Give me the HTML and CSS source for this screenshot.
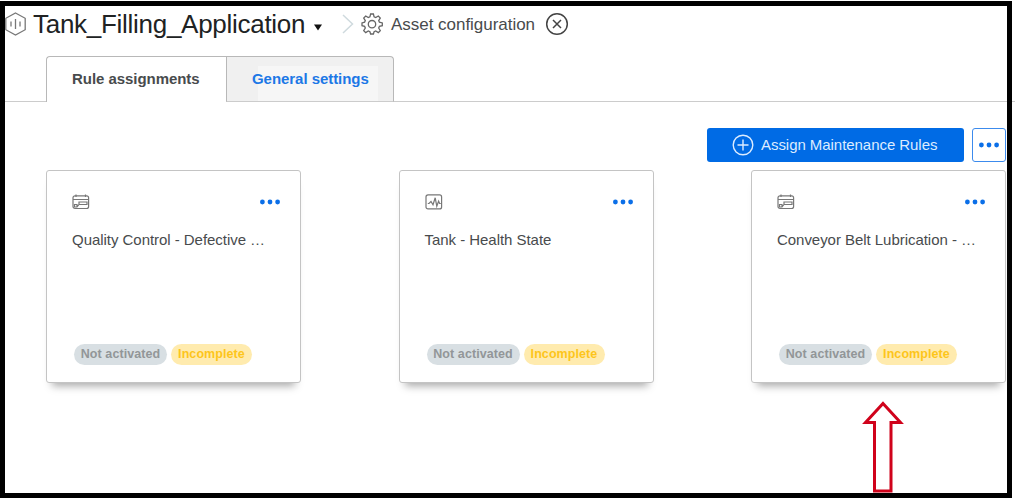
FILE: index.html
```html
<!DOCTYPE html>
<html lang="en">
<head>
<meta charset="utf-8">
<title>Asset configuration</title>
<link rel="stylesheet" href="styles.css">
</head>
<body>
<svg class="symbols" width="0" height="0" aria-hidden="true">
  <symbol id="dots" viewBox="0 0 20 6"><circle cx="2.4" cy="3" r="2.4"/><circle cx="10" cy="3" r="2.4"/><circle cx="17.6" cy="3" r="2.4"/></symbol>
  <symbol id="calendar" viewBox="0 0 18 16">
    <rect x="1" y="1.8" width="15.6" height="12.7" rx="2"/>
    <path d="M1 5.5h15.6M4 0.5v2.5M13.500 0.5v2.5M7 10.500V8h8v2.5H7L5 13H2.500v-2.500H5V13"/>
  </symbol>
  <symbol id="pulse" viewBox="0 0 18 16">
    <rect x="1" y="0.9" width="15.6" height="14" rx="2"/>
    <path d="M2.8 9.5h1.200l2-2 2 3.300 2.200-7 1.600 8.400 1.800-5 1 2.300h1.200"/>
  </symbol>
</svg>
<main class="frame">
  <header class="breadcrumb">
    <svg class="asset-icon" viewBox="0 0 22 24"><path d="M10.5 1l9.700 5.300v11.400L10.500 23 .8 17.700V6.300z"/><path d="M6 9.500v5M10.500 7v10M15 9.500v5"/></svg>
    <h1 class="title">Tank_Filling_Application</h1>
    <svg class="caret" viewBox="0 0 8 7"><path d="M0 .5h8L4 6.500z"/></svg>
    <svg class="chevron" viewBox="0 0 12 20"><path d="M1 1l9.500 9L1 19"/></svg>
    <svg class="gear" viewBox="0 0 22 22"><path d="M9.600 1h2.800l.7 2.900 1.600.7 2.600-1.600 2 2-1.600 2.600.7 1.600 2.900.7v2.800l-2.900.7-.7 1.600 1.600 2.600-2 2-2.600-1.600-1.600.7-.7 2.300H9.600l-.7-2.300-1.600-.7-2.600 1.600-2-2L4.300 15l-.7-1.600-2.600-.7V9.900l2.600-.7.700-1.600L2.700 5l2-2 2.600 1.600 1.600-.7z"/><circle cx="11" cy="11.200" r="3.700"/></svg>
    <span class="crumb">Asset configuration</span>
    <svg class="close" viewBox="0 0 24 24"><circle cx="12" cy="12" r="10.300"/><path d="M8 8l8 8M16 8l-8 8"/></svg>
  </header>
  <nav class="tabs">
    <div class="tab tab-active">Rule assignments</div>
    <div class="tab tab-idle">General settings</div>
  </nav>
  <div class="toolbar">
    <button class="assign"><svg viewBox="0 0 22 22"><circle cx="11" cy="11" r="9.800"/><path d="M11 5.500v11M5.500 11h11"/></svg><span class="assign-label">Assign Maintenance Rules</span></button>
    <button class="more"><svg class="dots"><use href="#dots"/></svg></button>
  </div>
  <section class="cards">
    <article class="card">
      <div class="card-top"><svg class="kind"><use href="#calendar"/></svg><svg class="dots"><use href="#dots"/></svg></div>
      <h2 class="name">Quality Control - Defective …</h2>
      <div class="badges"><span class="badge inactive">Not activated</span><span class="badge incomplete">Incomplete</span></div>
    </article>
    <article class="card">
      <div class="card-top"><svg class="kind"><use href="#pulse"/></svg><svg class="dots"><use href="#dots"/></svg></div>
      <h2 class="name">Tank - Health State</h2>
      <div class="badges"><span class="badge inactive">Not activated</span><span class="badge incomplete">Incomplete</span></div>
    </article>
    <article class="card">
      <div class="card-top"><svg class="kind"><use href="#calendar"/></svg><svg class="dots"><use href="#dots"/></svg></div>
      <h2 class="name">Conveyor Belt Lubrication - …</h2>
      <div class="badges"><span class="badge inactive">Not activated</span><span class="badge incomplete">Incomplete</span></div>
    </article>
  </section>
  <svg class="arrow" viewBox="0 0 42 92"><path d="M21 2.500L38.500 21.500H29V90H12.500V21.500H3.500z"/></svg>
</main>
</body>
</html>
```
FILE: styles.css
```css
* { box-sizing: border-box; }
body { margin: 0; width: 1015px; height: 500px; overflow: hidden; background: linear-gradient(#ccc, #ccc) 0 101px / 100% 1px no-repeat #fff; font-family: "Liberation Sans", Arial, sans-serif; color: #484b4d; display: flow-root; }
svg { display: block; flex: none; fill: none; stroke: #55585a; }
h1, h2 { margin: 0; font-weight: 400; white-space: nowrap; }
.symbols { position: absolute; }
.frame { position: relative; width: 1012px; height: 497px; margin-top: 1px; border: 5px solid #000; background: #fff; display: flex; flex-direction: column; }
.breadcrumb { height: 50px; display: flex; align-items: flex-start; white-space: nowrap; }
.asset-icon { width: 22px; height: 24px; margin-top: 6px; stroke: #777; stroke-width: 1.300; }
.title { width: 273px; margin-left: 6px; font-size: 26px; letter-spacing: -0.28px; line-height: 37px; color: #202223; }
.caret { width: 8px; height: 7px; margin: 18px 0 0 8px; fill: #111; stroke: none; }
.chevron { width: 12px; height: 20px; margin: 8px 0 0 20px; stroke: #cfdade; stroke-width: 1.500; }
.gear { width: 22px; height: 22px; margin: 7px 0 0 7px; stroke: #666; stroke-width: 1.300; }
.crumb { width: 145px; margin-left: 8px; font-size: 17px; letter-spacing: -0.03px; line-height: 38px; }
.close { width: 24px; height: 24px; margin: 6px 0 0 9px; stroke: #444; stroke-width: 1.500; }
.tabs { height: 46px; padding-left: 41px; display: flex; background: linear-gradient(#ccc, #ccc) 0 100% / 100% 1px no-repeat; }
.tab { height: 46px; font-size: 15px; font-weight: 700; line-height: 43px; border: 1px solid #b8b8b8; white-space: nowrap; }
.tab-active { width: 180px; padding-left: 25px; letter-spacing: -0.05px; border-bottom: 0; border-right: 0; border-radius: 4px 0 0 0; background: #fff; }
.tab-idle { width: 168px; padding-left: 25px; letter-spacing: -0.05px; color: #1c78e6; border-bottom-color: #ccc; border-radius: 0 4px 0 0; background: linear-gradient(#f6f6f6, #f6f6f6) 31px 9px / 120px 36px no-repeat #f0f0f0; }
.toolbar { height: 68px; padding: 26px 1px 0 0; display: flex; justify-content: flex-end; align-items: flex-start; gap: 8px; }
.assign { width: 257px; height: 34px; padding: 0 0 0 25px; border: 0; border-radius: 3px; background: #006be5; color: #dcecff; display: flex; align-items: center; gap: 7px; font: 15px "Liberation Sans", sans-serif; letter-spacing: -0.05px; white-space: nowrap; }
.assign-label { padding-bottom: 2px; }
.assign svg { width: 22px; height: 22px; stroke: #dcecff; stroke-width: 1.400; }
.more { width: 34px; height: 34px; padding: 0; border: 1px solid #3c8bed; border-radius: 3px; background: #fff; display: flex; align-items: center; justify-content: center; }
.dots { width: 20px; height: 6px; fill: #0b6fe8; stroke: none; }
.cards { padding: 0 1px 0 41px; display: flex; justify-content: space-between; }
.card { width: 255px; height: 213px; border: 1px solid #c4c4c4; border-radius: 3px; background: #fff; padding: 23px 20px 17px 25px; display: flex; flex-direction: column; box-shadow: 0 9px 8px -6px #aaa; }
.card-top { height: 16px; display: flex; align-items: center; justify-content: space-between; }
.kind { width: 18px; height: 16px; stroke: #777; stroke-width: 1.200; }
.name { margin-top: 19px; font-size: 15px; letter-spacing: -0.04px; line-height: 22px; }
.badges { margin-top: auto; padding-left: 2px; display: flex; gap: 4px; }
.badge { height: 21px; border-radius: 11px; font-size: 12.500px; letter-spacing: 0.08px; font-weight: 700; line-height: 21px; text-align: center; white-space: nowrap; }
.inactive { width: 93px; color: #929698; background: #d8dfe3; }
.incomplete { width: 81px; color: #fdc51b; background: #ffebae; }
.arrow { position: absolute; left: 857px; top: 395px; width: 42px; height: 92px; stroke: #d0021b; stroke-width: 3; }
```
